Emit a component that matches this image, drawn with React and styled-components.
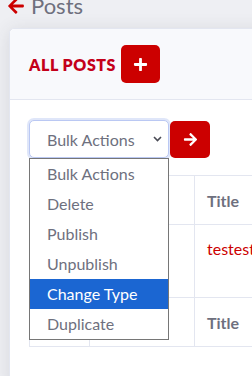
import React from "react";
import styled, { createGlobalStyle } from "styled-components";
import { FaArrowLeft, FaArrowRight, FaPlus } from "react-icons/fa";

const Global = createGlobalStyle`
  html, body { margin: 0; padding: 0; overflow: hidden; }
  body { background: #eeeff3; font-family: Lato, "Open Sans", sans-serif; color: #6e707e; }
`;

const Page = styled.div`
  width: 252px;
  height: 376px;
  padding-left: 9px;
  box-sizing: border-box;
  overflow: hidden;
`;

const Heading = styled.h1`
  display: flex;
  align-items: center;
  gap: 6px;
  height: 26px;
  margin: -7px 0 0 -2px;
  font-size: 22px;
  font-weight: 400;
  line-height: 26px;
  color: #6e707e;
  white-space: nowrap;
  svg { color: #c00; width: 18px; height: 18px; margin-top: -1px; }
`;

const Card = styled.div`
  margin-top: 9px;
  width: 400px;
  background: #fff;
  border: 1px solid #e3e6f0;
  border-radius: 5px;
  box-shadow: 0 2px 18px rgba(58, 59, 69, 0.12);
`;

const CardHeader = styled.div`
  display: flex;
  align-items: center;
  gap: 5px;
  padding: 16px 19px;
  background: #f8f9fc;
  border-bottom: 1px solid #e3e6f0;
  border-radius: 5px 5px 0 0;
`;

const Title = styled.h6`
  margin: 0;
  font-size: 16px;
  font-weight: 800;
  color: #c4001a;
  letter-spacing: 0.55px;
`;

const RedButton = styled.button`
  display: flex;
  align-items: center;
  justify-content: center;
  width: ${(p) => p.$w}px;
  height: ${(p) => p.$h}px;
  padding: 0;
  border: none;
  border-radius: 5px;
  background: #cc0000;
  color: #fff;
  svg { width: 15px; height: 15px; }
`;

const CardBody = styled.div`
  padding: 20px 19px 40px;
`;

const Toolbar = styled.div`
  position: relative;
  display: flex;
  align-items: center;
  gap: 1px;
`;

const Select = styled.div`
  box-sizing: border-box;
  display: flex;
  align-items: center;
  justify-content: space-between;
  width: 140px;
  height: 38px;
  padding: 0 6px 0 17px;
  border: 1px solid #bac8f3;
  border-radius: 5px;
  box-shadow: 0 0 0 2px rgba(78, 115, 223, 0.18);
  background: #fff;
  font-size: 16px;
  color: #6e707e;
`;

const Menu = styled.ul`
  position: absolute;
  top: 38px;
  left: 0;
  z-index: 2;
  box-sizing: border-box;
  width: 140px;
  margin: 0;
  padding: 0;
  list-style: none;
  background: #fff;
  border: 1px solid #767676;
`;

const Option = styled.li`
  height: 30px;
  line-height: 30px;
  padding-left: 17px;
  font-size: 16px;
  color: ${(p) => (p.$active ? "#fff" : "#6e707e")};
  background: ${(p) => (p.$active ? "#1b66d2" : "transparent")};
`;

const Table = styled.table`
  margin-top: 17px;
  width: 372px;
  border-collapse: collapse;
  font-size: 16px;
  td, th { border: 1px solid #e3e6f0; padding: 0 12px; text-align: left; white-space: nowrap; }
`;

const HeadCell = styled.th`
  height: 48px;
  font-weight: 700;
  color: #6e707e;
  width: ${(p) => p.$w || "auto"};
`;

const BodyCell = styled.td`
  height: 73px;
  vertical-align: top;
  padding-top: 14px !important;
  box-sizing: border-box;
  color: #c00;
`;

const options = ["Bulk Actions", "Delete", "Publish", "Unpublish", "Change Type", "Duplicate"];

function Chevron() {
  return (
    <svg width="9" height="6" viewBox="0 0 9 6">
      <path d="M1 1l3.5 3.5L8 1" fill="none" stroke="#4a4b55" strokeWidth="1.6" />
    </svg>
  );
}

export default function App() {
  return (
    <Page>
      <Global />
      <Heading>
        <FaArrowLeft />
        Posts
      </Heading>
      <Card>
        <CardHeader>
          <Title>ALL POSTS</Title>
          <RedButton $w={39} $h={38}>
            <FaPlus />
          </RedButton>
        </CardHeader>
        <CardBody>
          <Toolbar>
            <Select>
              Bulk Actions
              <Chevron />
            </Select>
            <RedButton $w={40} $h={37}>
              <FaArrowRight />
            </RedButton>
            <Menu>
              {options.map((o) => (
                <Option key={o} $active={o === "Change Type"}>
                  {o}
                </Option>
              ))}
            </Menu>
          </Toolbar>
          <Table>
            <thead>
              <tr>
                <HeadCell $w="35px"></HeadCell>
                <HeadCell $w="80px"></HeadCell>
                <HeadCell>Title</HeadCell>
              </tr>
            </thead>
            <tbody>
              <tr>
                <BodyCell></BodyCell>
                <BodyCell></BodyCell>
                <BodyCell>testest</BodyCell>
              </tr>
            </tbody>
            <tfoot>
              <tr>
                <HeadCell></HeadCell>
                <HeadCell></HeadCell>
                <HeadCell>Title</HeadCell>
              </tr>
            </tfoot>
          </Table>
        </CardBody>
      </Card>
    </Page>
  );
}
